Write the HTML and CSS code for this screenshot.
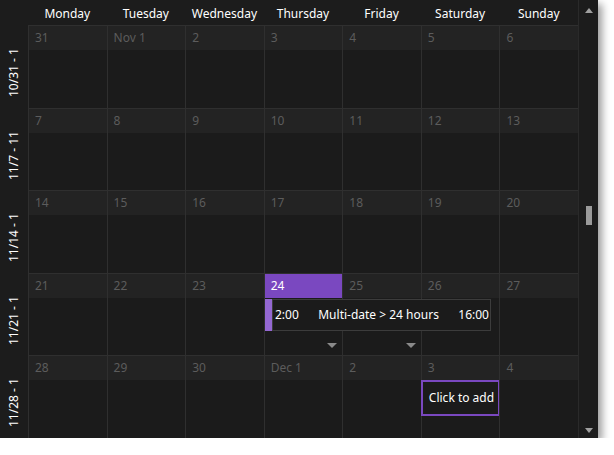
FILE: index.html
```html
<!DOCTYPE html>
<html lang="en">
<head>
    <meta charset="UTF-8">
    <meta name="viewport" content="width=device-width, initial-scale=1.0">
    <title>Month View</title>
    <link rel="stylesheet" href="styles.css">
</head>
<body>
    <div class="window">
        <div class="calendar">
            <div class="head">
                <div></div>
                <div class="day-name">Monday</div>
                <div class="day-name">Tuesday</div>
                <div class="day-name">Wednesday</div>
                <div class="day-name">Thursday</div>
                <div class="day-name">Friday</div>
                <div class="day-name">Saturday</div>
                <div class="day-name">Sunday</div>
            </div>

            <div class="week">
                <div class="wk"><span class="wk-label">10/31 - 11/6</span></div>
                <div class="cell"><div class="num">31</div></div>
                <div class="cell"><div class="num">Nov 1</div></div>
                <div class="cell"><div class="num">2</div></div>
                <div class="cell"><div class="num">3</div></div>
                <div class="cell"><div class="num">4</div></div>
                <div class="cell"><div class="num">5</div></div>
                <div class="cell"><div class="num">6</div></div>
            </div>

            <div class="week">
                <div class="wk"><span class="wk-label">11/7 - 11/13</span></div>
                <div class="cell"><div class="num">7</div></div>
                <div class="cell"><div class="num">8</div></div>
                <div class="cell"><div class="num">9</div></div>
                <div class="cell"><div class="num">10</div></div>
                <div class="cell"><div class="num">11</div></div>
                <div class="cell"><div class="num">12</div></div>
                <div class="cell"><div class="num">13</div></div>
            </div>

            <div class="week">
                <div class="wk"><span class="wk-label">11/14 - 11/20</span></div>
                <div class="cell"><div class="num">14</div></div>
                <div class="cell"><div class="num">15</div></div>
                <div class="cell"><div class="num">16</div></div>
                <div class="cell"><div class="num">17</div></div>
                <div class="cell"><div class="num">18</div></div>
                <div class="cell"><div class="num">19</div></div>
                <div class="cell"><div class="num">20</div></div>
            </div>

            <div class="week">
                <div class="wk"><span class="wk-label">11/21 - 11/27</span></div>
                <div class="cell"><div class="num">21</div></div>
                <div class="cell"><div class="num">22</div></div>
                <div class="cell"><div class="num">23</div></div>
                <div class="cell today"><div class="num">24</div><span class="more"></span></div>
                <div class="cell"><div class="num">25</div><span class="more"></span></div>
                <div class="cell"><div class="num">26</div></div>
                <div class="cell"><div class="num">27</div></div>

                <div class="event">
                    <div class="event-strip"></div>
                    <div class="event-box">
                        <span>2:00</span>
                        <span>Multi-date &gt; 24 hours</span>
                        <span>16:00</span>
                    </div>
                </div>
            </div>

            <div class="week">
                <div class="wk"><span class="wk-label">11/28 - 12/4</span></div>
                <div class="cell"><div class="num">28</div></div>
                <div class="cell"><div class="num">29</div></div>
                <div class="cell"><div class="num">30</div></div>
                <div class="cell"><div class="num">Dec 1</div></div>
                <div class="cell"><div class="num">2</div></div>
                <div class="cell"><div class="num">3</div><div class="add">Click to add</div></div>
                <div class="cell"><div class="num">4</div></div>
            </div>
        </div>

        <div class="scroll">
            <span class="arrow-up"></span>
            <span class="thumb"></span>
            <span class="arrow-down"></span>
        </div>
    </div>
</body>
</html>
```

FILE: styles.css
```css
body {
    margin: 0;
    background-color: #ffffff;
    font-family: "Noto Sans", "Open Sans", sans-serif;
    font-size: 12px;
}
.window {
    width: 598px;
    height: 438px;
    display: flex;
    background-color: #1c1c1c;
    box-shadow: 4px 4px 8px rgba(0, 0, 0, 0.4);
}
.calendar {
    width: 578px;
    display: flex;
    flex-direction: column;
}
.head, .week {
    display: grid;
    grid-template-columns: 28px repeat(7, 1fr);
}
.head {
    height: 25px;
}
.day-name {
    color: #ffffff;
    text-align: center;
    line-height: 27px;
}
.week {
    flex: 1;
    min-height: 0;
    position: relative;
}
.wk {
    padding-top: 24px;
    display: flex;
    justify-content: center;
    align-items: flex-start;
    overflow: hidden;
    min-height: 0;
}
.wk-label {
    writing-mode: vertical-rl;
    transform: rotate(180deg);
    color: #ffffff;
    height: 48px;
    padding-top: 10px;
    overflow: hidden;
    white-space: nowrap;
    line-height: 18px;
}
.cell {
    border-left: 1px solid #2f2f2f;
    border-top: 1px solid #2f2f2f;
    background-color: #1b1b1b;
    display: flex;
    flex-direction: column;
}
.num {
    height: 24px;
    line-height: 24px;
    padding-left: 6px;
    background-color: #232323;
    color: #5c5c5c;
}
.today .num {
    background-color: #7a48c0;
    color: #ffffff;
}
.more {
    margin: auto 5px 7px auto;
    width: 0;
    height: 0;
    border-left: 5px solid transparent;
    border-right: 5px solid transparent;
    border-top: 5px solid #8a8a8a;
}
.event {
    position: absolute;
    left: 265px;
    top: 26px;
    height: 32px;
    display: flex;
}
.event-strip {
    width: 7px;
    background-color: #9468d2;
}
.event-box {
    width: 214px;
    border: 1px solid #3c3c3c;
    background-color: #1b1b1b;
    display: flex;
    align-items: center;
    justify-content: space-between;
    padding: 0 1px 0 2px;
    color: #ffffff;
}
.add {
    margin: 0 -1px 0 -1px;
    height: 36px;
    box-sizing: border-box;
    border: 2px solid #7a48c0;
    color: #ffffff;
    line-height: 31px;
    padding-left: 6px;
}
.scroll {
    width: 20px;
    border-left: 1px solid #2a2a2a;
    box-sizing: border-box;
    display: flex;
    flex-direction: column;
    align-items: center;
}
.arrow-up {
    margin-top: 8px;
    width: 0;
    height: 0;
    border-left: 4px solid transparent;
    border-right: 4px solid transparent;
    border-bottom: 5px solid #a0a0a0;
}
.thumb {
    margin-top: 193px;
    width: 6px;
    height: 19px;
    background-color: #9a9a9a;
}
.arrow-down {
    margin-top: auto;
    margin-bottom: 5px;
    width: 0;
    height: 0;
    border-left: 4px solid transparent;
    border-right: 4px solid transparent;
    border-top: 5px solid #a0a0a0;
}
```
